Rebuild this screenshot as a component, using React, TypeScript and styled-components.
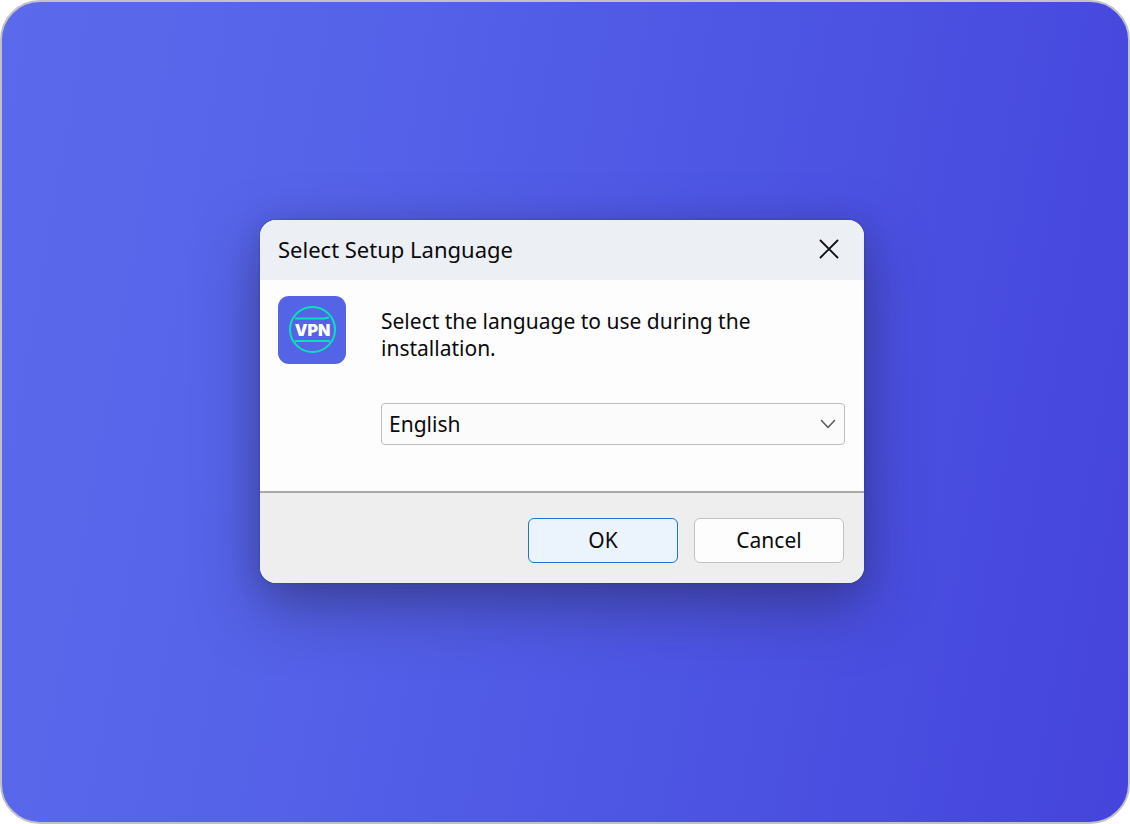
import React, { useState } from "react";
import styled, { createGlobalStyle } from "styled-components";

const GlobalStyle = createGlobalStyle`
  *, *::before, *::after { box-sizing: border-box; }
  body {
    margin: 0;
    background: #ffffff;
    color: #0a0a0c;
    font-family: "Noto Sans", "Open Sans", sans-serif;
    font-size: 21px;
  }
  button, select { font: inherit; color: inherit; }
`;

const Desktop = styled.main`
  display: flex;
  align-items: center;
  justify-content: center;
  min-height: 100vh;
  padding: 24px 30px 46px 24px;
  border: 2px solid #c2c2c6;
  border-radius: 40px;
  background: linear-gradient(100deg, #5b6aec 0%, #5563e9 28%, #4d55e3 62%, #4544dc 100%);
`;

const Dialog = styled.section`
  width: 100%;
  max-width: 604px;
  overflow: hidden;
  border-radius: 16px;
  background: #fdfdfe;
  box-shadow:
    0 0 2px rgba(20, 20, 70, 0.3),
    0 24px 60px rgba(40, 40, 90, 0.5),
    0 4px 28px rgba(40, 40, 90, 0.2);
`;

const TitleBar = styled.header`
  display: flex;
  align-items: center;
  justify-content: space-between;
  height: 60px;
  padding: 0 16px 2px 18px;
  background: #eceff4;
`;

const Title = styled.h1`
  margin: 0;
  font-size: 22px;
  line-height: 28px;
  font-weight: 400;
`;

const CloseButton = styled.button`
  display: grid;
  place-items: center;
  width: 38px;
  height: 38px;
  padding: 0;
  border: 0;
  border-radius: 4px;
  background: transparent;
`;

const Content = styled.div`
  display: flex;
  align-items: flex-start;
  gap: 35px;
  padding: 16px 19px 46px 18px;
`;

const AppIcon = styled.svg`
  flex: none;
  width: 68px;
  height: 68px;
`;

const Field = styled.div`
  display: flex;
  flex: 1;
  flex-direction: column;
  gap: 41px;
  min-width: 0;
  padding-top: 12px;
`;

const Prompt = styled.label`
  max-width: 400px;
  line-height: 27px;
`;

const SelectBox = styled.div`
  display: grid;
  align-items: center;

  > * { grid-area: 1 / 1; }
  > svg {
    justify-self: end;
    margin-right: 9px;
    pointer-events: none;
  }
`;

const LanguageSelect = styled.select`
  appearance: none;
  width: 100%;
  height: 42px;
  padding: 0 36px 0 7px;
  border: 1px solid #bdbdbf;
  border-radius: 4px;
  background: #fbfbfc;
`;

const Footer = styled.footer`
  display: flex;
  justify-content: flex-end;
  gap: 16px;
  padding: 25px 20px 20px;
  border-top: 2px solid #a9a9ab;
  background: #eeeeee;
`;

const ActionButton = styled.button<{ $primary?: boolean }>`
  width: 150px;
  height: 45px;
  padding: 0;
  border: 1px solid ${(p) => (p.$primary ? "#1f74d4" : "#c2c2c4")};
  border-radius: 6px;
  background: ${(p) => (p.$primary ? "#ebf3fc" : "#fdfdfd")};
`;

const languages = ["English", "Deutsch", "Español", "Français"];

export default function App() {
  const [language, setLanguage] = useState("English");

  return (
    <>
      <GlobalStyle />
      <Desktop>
        <Dialog role="dialog" aria-labelledby="setup-title">
          <TitleBar>
            <Title id="setup-title">Select Setup Language</Title>
            <CloseButton type="button" aria-label="Close">
              <svg width="20" height="20" viewBox="0 0 20 20" fill="none" stroke="#101014" strokeWidth="1.8" strokeLinecap="round">
                <path d="M1.5 1.5 18.5 18.5M18.5 1.5 1.5 18.5" />
              </svg>
            </CloseButton>
          </TitleBar>
          <Content>
            <AppIcon viewBox="0 0 68 68" role="img" aria-label="VPN">
              <rect width="68" height="68" rx="11" fill="#5563e6" />
              <g fill="none" stroke="#08e2b8" strokeWidth="2">
                <circle cx="34.5" cy="33.5" r="22.5" />
                <path d="M17 22.5H46l5-1M17 45H52" />
              </g>
              <text
                x="34.5"
                y="40"
                textAnchor="middle"
                fill="#ffffff"
                fontFamily="Inter, sans-serif"
                fontSize="16"
                fontWeight="900"
              >
                VPN
              </text>
            </AppIcon>
            <Field>
              <Prompt htmlFor="language">Select the language to use during the installation.</Prompt>
              <SelectBox>
                <LanguageSelect id="language" value={language} onChange={(e) => setLanguage(e.target.value)}>
                  {languages.map((name) => (
                    <option key={name}>{name}</option>
                  ))}
                </LanguageSelect>
                <svg width="16" height="10" viewBox="0 0 16 10" fill="none" stroke="#5c5c60" strokeWidth="1.6" strokeLinecap="round" strokeLinejoin="round">
                  <path d="M1.5 1.5 8 8.5 14.5 1.5" />
                </svg>
              </SelectBox>
            </Field>
          </Content>
          <Footer>
            <ActionButton type="button" $primary>OK</ActionButton>
            <ActionButton type="button">Cancel</ActionButton>
          </Footer>
        </Dialog>
      </Desktop>
    </>
  );
}
